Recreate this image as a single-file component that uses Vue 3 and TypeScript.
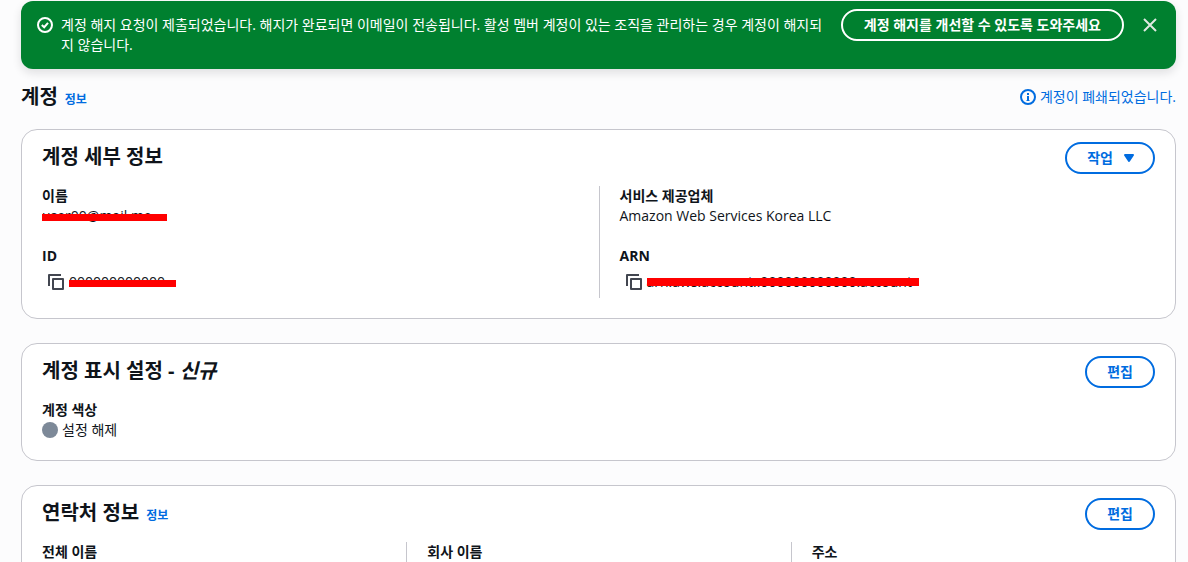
<script setup lang="ts">
interface Field {
  label: string
  value: string
  redacted?: boolean
  copy?: boolean
  bar?: string
}

const detailColumns: Field[][] = [
  [
    { label: '이름', value: 'user00@mail.me', redacted: true, bar: 'bar-name' },
    { label: 'ID', value: '000000000000', redacted: true, copy: true, bar: 'bar-id' },
  ],
  [
    { label: '서비스 제공업체', value: 'Amazon Web Services Korea LLC' },
    { label: 'ARN', value: 'arn:aws:account::000000000000:account', redacted: true, copy: true, bar: 'bar-arn' },
  ],
]

const contactLabels: string[] = ['전체 이름', '회사 이름', '주소']
</script>

<template>
  <main class="page">
    <section class="banner" role="status">
      <svg class="banner-icon" width="16" height="16" viewBox="0 0 16 16" fill="none" stroke="currentColor" stroke-width="2" aria-hidden="true">
        <circle cx="8" cy="8" r="7" />
        <path d="M4.8 8l2.4 2.2L11 5.8" />
      </svg>
      <p class="banner-text">계정 해지 요청이 제출되었습니다. 해지가 완료되면 이메일이 전송됩니다. 활성 멤버 계정이 있는 조직을 관리하는 경우 계정이 해지되지 않습니다.</p>
      <button type="button" class="btn btn-light">계정 해지를 개선할 수 있도록 도와주세요</button>
      <button type="button" class="close" aria-label="닫기">
        <svg width="16" height="16" viewBox="0 0 16 16" fill="none" stroke="currentColor" stroke-width="2" aria-hidden="true">
          <path d="M2 2l12 12M14 2L2 14" />
        </svg>
      </button>
    </section>

    <header class="page-header">
      <div class="title-group">
        <h1>계정</h1>
        <a href="#" class="info">정보</a>
      </div>
      <p class="status">
        <svg width="16" height="16" viewBox="0 0 16 16" fill="none" stroke="currentColor" stroke-width="2" aria-hidden="true">
          <circle cx="8" cy="8" r="7" />
          <path d="M8 4v2M8 7v5" />
          <path d="M7 7.5h1M6.5 11.5h3" stroke-width="1" />
        </svg>
        <span>계정이 폐쇄되었습니다.</span>
      </p>
    </header>

    <section class="card">
      <header class="card-header">
        <h2>계정 세부 정보</h2>
        <button type="button" class="btn btn-menu">
          작업
          <svg width="16" height="16" viewBox="0 0 16 16" aria-hidden="true">
            <path d="M4 5h8l-4 6z" fill="currentColor" stroke="currentColor" stroke-width="2" stroke-linejoin="round" />
          </svg>
        </button>
      </header>
      <div class="columns two">
        <dl v-for="(column, i) in detailColumns" :key="i" class="column">
          <div v-for="field in column" :key="field.label">
            <dt>{{ field.label }}</dt>
            <dd :class="{ tall: field.copy }">
              <button v-if="field.copy" type="button" class="copy" :aria-label="field.label + ' 복사'">
                <svg width="16" height="16" viewBox="0 0 16 16" fill="none" stroke="currentColor" stroke-width="2" stroke-linejoin="round" aria-hidden="true">
                  <path d="M5 5h10v10H5z" />
                  <path d="M1 12V1h12" />
                </svg>
              </button>
              <span v-if="field.redacted" class="redacted" :class="field.bar">{{ field.value }}</span>
              <template v-else>{{ field.value }}</template>
            </dd>
          </div>
        </dl>
      </div>
    </section>

    <section class="card">
      <header class="card-header">
        <h2>계정 표시 설정 - <em>신규</em></h2>
        <button type="button" class="btn">편집</button>
      </header>
      <dl class="column">
        <div>
          <dt>계정 색상</dt>
          <dd><span class="dot"></span>설정 해제</dd>
        </div>
      </dl>
    </section>

    <section class="card">
      <header class="card-header">
        <div class="title-group">
          <h2>연락처 정보</h2>
          <a href="#" class="info">정보</a>
        </div>
        <button type="button" class="btn">편집</button>
      </header>
      <div class="columns three">
        <dl v-for="label in contactLabels" :key="label" class="column">
          <div>
            <dt>{{ label }}</dt>
          </div>
        </dl>
      </div>
    </section>
  </main>
</template>

<style>
html,
body {
  background: #fcfcfd;
}
body {
  height: 100vh;
  overflow: hidden;
}
</style>

<style scoped>
.page {
  box-sizing: border-box;
  padding: 1px 12px 0 21px;
  font-family: "Open Sans", "Noto Sans CJK KR", sans-serif;
  font-size: 14px;
  line-height: 20px;
  color: #0f141a;
}
h1,
h2,
p,
dl,
dd {
  margin: 0;
}
h1,
h2 {
  font-size: 20px;
  line-height: 24px;
  font-weight: 700;
}
button {
  font: inherit;
  cursor: pointer;
}
svg {
  display: block;
  flex: none;
}
.banner {
  display: flex;
  align-items: flex-start;
  padding: 8px 16px 14px;
  border-radius: 12px;
  background: #00802f;
  color: #fff;
  box-shadow: 0 4px 10px rgba(15, 20, 26, 0.12);
}
.banner-icon {
  margin: 8px 8px 0 0;
}
.banner-text {
  flex: 1;
  padding-top: 6px;
}
.btn {
  box-sizing: border-box;
  display: flex;
  align-items: center;
  gap: 8px;
  flex: none;
  height: 32px;
  padding: 0 20px;
  border: 2px solid #006ce0;
  border-radius: 16px;
  background: transparent;
  color: #006ce0;
  font-weight: 700;
}
.btn-light {
  margin-left: 16px;
  padding: 0 21px;
  border-color: #fff;
  color: #fff;
}
.btn-menu {
  padding-right: 16px;
}
.close {
  margin: 8px 2px 0 18px;
  padding: 0;
  border: 0;
  background: none;
  color: #dfe9e2;
}
.page-header {
  display: flex;
  justify-content: space-between;
  align-items: center;
  padding: 16px 0 20px;
}
.title-group {
  display: flex;
  align-items: baseline;
  gap: 7px;
}
.info {
  color: #006ce0;
  font-size: 12px;
  line-height: 16px;
  font-weight: 700;
  text-decoration: none;
}
.status {
  display: flex;
  align-items: center;
  gap: 4px;
  color: #006ce0;
}
.card {
  margin-bottom: 24px;
  padding: 12px 0 20px;
  border: 1px solid #c6c6cd;
  border-radius: 16px;
  background: #fff;
}
.card-header {
  display: flex;
  justify-content: space-between;
  align-items: flex-start;
  padding: 0 20px;
  margin-bottom: 12px;
}
.card-header h2 {
  padding-top: 3px;
}
.columns {
  display: grid;
}
.two {
  grid-template-columns: repeat(2, 1fr);
}
.three {
  grid-template-columns: repeat(3, 1fr);
}
.column {
  display: flex;
  flex-direction: column;
  gap: 20px;
  padding: 0 20px;
}
.column + .column {
  border-left: 1px solid #c6c6cd;
}
dt {
  font-weight: 700;
}
dd {
  display: flex;
  align-items: center;
}
.tall {
  height: 32px;
}
.copy {
  padding: 0 5px 0 6px;
  border: 0;
  background: none;
  color: #424650;
}
.redacted {
  position: relative;
}
.redacted::after {
  content: "";
  position: absolute;
  left: 0;
  top: 8px;
  height: 7px;
  background: #f00;
}
.bar-name::after {
  width: 125px;
}
.bar-id::after {
  width: 107px;
}
.bar-arn::after {
  width: 272px;
  height: 8px;
  top: 6px;
}
.dot {
  width: 16px;
  height: 16px;
  margin-right: 4px;
  border-radius: 50%;
  background: #7d8998;
}
</style>
